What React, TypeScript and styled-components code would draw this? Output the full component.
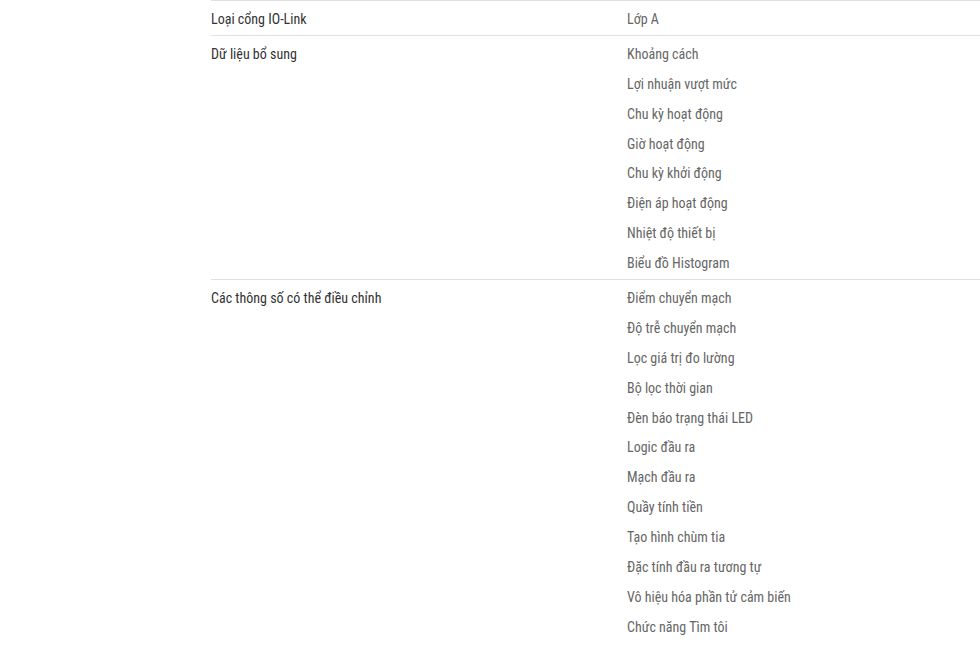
import React from "react";
import styled, { createGlobalStyle } from "styled-components";

const Global = createGlobalStyle`
  html, body { margin: 0; padding: 0; background: #fff; }
  body { font-family: "Roboto Condensed", "Liberation Sans Narrow", Roboto, sans-serif; }
`;

const Page = styled.div`
  padding-left: 211px;
  width: 980px;
  box-sizing: border-box;
  overflow: hidden;
`;

const Table = styled.div`
  display: flex;
  flex-direction: column;
  width: 800px;
`;

const Row = styled.div`
  display: grid;
  grid-template-columns: 416px 1fr;
  border-top: 1px solid #e0e0e0;
  padding: 4px 0 0.12px;
`;

const Label = styled.div`
  font-size: 14px;
  color: #333;
  line-height: 29.88px;
`;

const Values = styled.ul`
  list-style: none;
  margin: 0;
  padding: 0;
`;

const Value = styled.li`
  font-size: 14px;
  color: #666;
  line-height: 29.88px;
`;

const rows: { label: string; values: string[] }[] = [
  { label: "Loại cổng IO-Link", values: ["Lớp A"] },
  {
    label: "Dữ liệu bổ sung",
    values: [
      "Khoảng cách",
      "Lợi nhuận vượt mức",
      "Chu kỳ hoạt động",
      "Giờ hoạt động",
      "Chu kỳ khởi động",
      "Điện áp hoạt động",
      "Nhiệt độ thiết bị",
      "Biểu đồ Histogram",
    ],
  },
  {
    label: "Các thông số có thể điều chỉnh",
    values: [
      "Điểm chuyển mạch",
      "Độ trễ chuyển mạch",
      "Lọc giá trị đo lường",
      "Bộ lọc thời gian",
      "Đèn báo trạng thái LED",
      "Logic đầu ra",
      "Mạch đầu ra",
      "Quầy tính tiền",
      "Tạo hình chùm tia",
      "Đặc tính đầu ra tương tự",
      "Vô hiệu hóa phần tử cảm biến",
      "Chức năng Tìm tôi",
    ],
  },
];

export default function App() {
  return (
    <>
      <Global />
      <Page>
        <Table>
          {rows.map((r) => (
            <Row key={r.label}>
              <Label>{r.label}</Label>
              <Values>
                {r.values.map((v) => (
                  <Value key={v}>{v}</Value>
                ))}
              </Values>
            </Row>
          ))}
        </Table>
      </Page>
    </>
  );
}
